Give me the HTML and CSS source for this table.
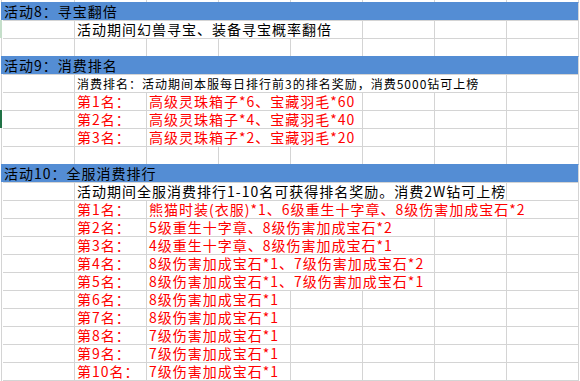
FILE: index.html
```html
<!DOCTYPE html>
<html lang="zh-CN">
<head>
<meta charset="utf-8">
<title>活动</title>
<link rel="stylesheet" href="styles.css">
</head>
<body>
<div class="sheet">
  <div class="row top"><div class="edge"></div><div class="gut"></div><div class="c"></div><div class="c"></div><div class="c"></div><div class="c"></div><div class="c"></div><div class="c"></div><div class="c"></div><div class="c"></div></div>

  <div class="row"><div class="edge"></div><div class="c hdr">活动8：寻宝翻倍</div></div>
  <div class="row"><div class="edge lite"></div><div class="gut lite"></div><div class="c"></div><div class="c s4">活动期间幻兽寻宝、装备寻宝概率翻倍</div><div class="c"></div><div class="c"></div><div class="c"></div></div>
  <div class="row"><div class="edge"></div><div class="gut"></div><div class="c"></div><div class="c"></div><div class="c"></div><div class="c"></div><div class="c"></div><div class="c"></div><div class="c"></div><div class="c"></div></div>

  <div class="row"><div class="edge"></div><div class="c hdr">活动9：消费排名</div></div>
  <div class="row"><div class="edge"></div><div class="gut"></div><div class="c"></div><div class="c s6 sm">消费排名：活动期间本服每日排行前3的排名奖励，消费5000钻可上榜</div><div class="c"></div></div>
  <div class="row red"><div class="edge"></div><div class="gut"></div><div class="c"></div><div class="c">第1名：</div><div class="c s3">高级灵珠箱子*6、宝藏羽毛*60</div><div class="c"></div><div class="c"></div><div class="c"></div></div>
  <div class="row red"><div class="edge dark"></div><div class="gut dark"></div><div class="c"></div><div class="c">第2名：</div><div class="c s3">高级灵珠箱子*4、宝藏羽毛*40</div><div class="c"></div><div class="c"></div><div class="c"></div></div>
  <div class="row red"><div class="edge"></div><div class="gut"></div><div class="c"></div><div class="c">第3名：</div><div class="c s3">高级灵珠箱子*2、宝藏羽毛*20</div><div class="c"></div><div class="c"></div><div class="c"></div></div>
  <div class="row"><div class="edge"></div><div class="gut"></div><div class="c"></div><div class="c"></div><div class="c"></div><div class="c"></div><div class="c"></div><div class="c"></div><div class="c"></div><div class="c"></div></div>

  <div class="row"><div class="edge"></div><div class="c hdr">活动10：全服消费排行</div></div>
  <div class="row"><div class="edge"></div><div class="gut"></div><div class="c"></div><div class="c s6">活动期间全服消费排行1-10名可获得排名奖励。消费2W钻可上榜</div><div class="c"></div></div>
  <div class="row red"><div class="edge"></div><div class="gut"></div><div class="c"></div><div class="c">第1名：</div><div class="c s6">熊猫时装(衣服)*1、6级重生十字章、8级伤害加成宝石*2</div></div>
  <div class="row red"><div class="edge"></div><div class="gut"></div><div class="c"></div><div class="c">第2名：</div><div class="c s4">5级重生十字章、8级伤害加成宝石*2</div><div class="c"></div><div class="c"></div></div>
  <div class="row red"><div class="edge"></div><div class="gut"></div><div class="c"></div><div class="c">第3名：</div><div class="c s4">4级重生十字章、8级伤害加成宝石*1</div><div class="c"></div><div class="c"></div></div>
  <div class="row red"><div class="edge"></div><div class="gut"></div><div class="c"></div><div class="c">第4名：</div><div class="c s4">8级伤害加成宝石*1、7级伤害加成宝石*2</div><div class="c"></div><div class="c"></div></div>
  <div class="row red"><div class="edge"></div><div class="gut"></div><div class="c"></div><div class="c">第5名：</div><div class="c s4">8级伤害加成宝石*1、7级伤害加成宝石*1</div><div class="c"></div><div class="c"></div></div>
  <div class="row red"><div class="edge"></div><div class="gut"></div><div class="c"></div><div class="c">第6名：</div><div class="c s2">8级伤害加成宝石*1</div><div class="c"></div><div class="c"></div><div class="c"></div><div class="c"></div></div>
  <div class="row red"><div class="edge"></div><div class="gut"></div><div class="c"></div><div class="c">第7名：</div><div class="c s2">8级伤害加成宝石*1</div><div class="c"></div><div class="c"></div><div class="c"></div><div class="c"></div></div>
  <div class="row red"><div class="edge"></div><div class="gut"></div><div class="c"></div><div class="c">第8名：</div><div class="c s2">7级伤害加成宝石*1</div><div class="c"></div><div class="c"></div><div class="c"></div><div class="c"></div></div>
  <div class="row red"><div class="edge"></div><div class="gut"></div><div class="c"></div><div class="c">第9名：</div><div class="c s2">7级伤害加成宝石*1</div><div class="c"></div><div class="c"></div><div class="c"></div><div class="c"></div></div>
  <div class="row red"><div class="edge"></div><div class="gut"></div><div class="c"></div><div class="c">第10名：</div><div class="c s2">7级伤害加成宝石*1</div><div class="c"></div><div class="c"></div><div class="c"></div><div class="c"></div></div>

  <div class="row end"><div class="edge"></div><div class="gut"></div><div class="c"></div><div class="c"></div><div class="c"></div><div class="c"></div><div class="c"></div><div class="c"></div><div class="c"></div><div class="c"></div></div>
</div>
</body>
</html>
```

FILE: styles.css
```css
* { box-sizing: border-box; }
html, body { margin: 0; padding: 0; background: #fff; }
body {
  font-family: "Noto Sans CJK SC", "Noto Sans", sans-serif;
  color: #000;
}
.sheet { width: 580px; height: 381px; overflow: hidden; }
.row {
  display: grid;
  grid-template-columns: 1px 2px repeat(8, 72px);
  height: 18px;
}
.row.top { height: 2px; }
.row.end { height: 1px; }
.edge { background: #fff; }
.edge.lite { background: #c5dfca; }
.edge.dark { background: #217346; }
.gut { border-left: 1px solid #d4d4d4; background: #fff; }
.gut.lite { border-left-color: #c5dfca; }
.gut.dark { border-left-color: #217346; }
.c {
  border-top: 1px solid #d4d4d4;
  border-right: 1px solid #d4d4d4;
  font-size: 14px;
  letter-spacing: 1px;
  line-height: 17px;
  padding-left: 2px;
  white-space: nowrap;
  overflow: hidden;
  text-spacing-trim: space-all;
}
.top .c { border-top: none; }
.end .c { border-right: none; }
.s2 { grid-column: span 2; }
.s3 { grid-column: span 3; }
.s4 { grid-column: span 4; }
.s6 { grid-column: span 6; }
.sm { font-size: 12px; }
.red .c { color: #ff0000; }
.hdr {
  grid-column: 2 / -1;
  background: #548dd4;
  border-top-color: #548dd4;
  padding-left: 3px;
}
```
